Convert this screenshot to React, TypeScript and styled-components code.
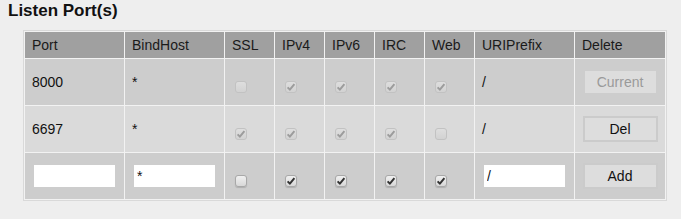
import styled, { createGlobalStyle } from 'styled-components';

const GlobalStyle = createGlobalStyle`
	body {
		margin: 0;
		background: #eeeeee;
		font-family: "Liberation Sans", Arial, sans-serif;
		font-size: 14px;
		color: #111;
	}
`;

const Page = styled.div`
	padding: 1px 8px 0;
`;

const Title = styled.h3`
	margin: 0;
	font-size: 17px;
	line-height: 20px;
	font-weight: bold;
	color: #111;
`;

const Table = styled.table`
	margin: 9px 0 0 15px;
	border: 1px solid #d9d9d9;
	border-collapse: separate;
	border-spacing: 1px;
	background: #f2f2f2;
	table-layout: fixed;
`;

const HeadCell = styled.th<{ $w: number }>`
	width: ${({ $w }) => $w}px;
	height: 26px;
	padding: 0 7px;
	box-sizing: border-box;
	background: #a0a0a0;
	font-weight: normal;
	text-align: left;
	color: #1a1a1a;
	vertical-align: middle;
`;

const Row = styled.tr<{ $alt: boolean }>`
	background: ${({ $alt }) => ($alt ? '#dadada' : '#cdcdcd')};
`;

const Cell = styled.td`
	height: 46px;
	padding: 0 7px;
	box-sizing: border-box;
	vertical-align: middle;
	color: #111;
`;

const ButtonCell = styled(Cell)`
	padding: 0;
	text-align: center;
`;

const Check = styled.span<{ $disabled: boolean }>`
	display: block;
	box-sizing: border-box;
	width: 12px;
	height: 12px;
	margin: 9px 0 0 3px;
	border-radius: 3px;
	border: 1px solid ${({ $disabled }) => ($disabled ? '#c2c2c2' : '#a8a8a8')};
	background: ${({ $disabled }) =>
		$disabled
			? 'linear-gradient(#dedede, #d2d2d2)'
			: 'linear-gradient(#f0f0f0, #d8d8d8)'};
	box-shadow: ${({ $disabled }) =>
		$disabled ? 'none' : '0 1px 1px rgba(0,0,0,0.15)'};
	svg {
		display: block;
	}
`;

const TextInput = styled.input`
	display: block;
	box-sizing: border-box;
	width: 81px;
	height: 22px;
	margin-left: 2px;
	padding: 0 3px;
	border: none;
	outline: none;
	background: #fff;
	font-family: "Liberation Sans", Arial, sans-serif;
	font-size: 14px;
	color: #111;
`;

const Button = styled.button`
	box-sizing: border-box;
	width: 75px;
	height: 26px;
	border: 2px solid #cbcbcb;
	background: #dddddd;
	font-family: "Liberation Sans", Arial, sans-serif;
	font-size: 14px;
	color: #111;
	padding: 0;
	cursor: pointer;

	&:disabled {
		color: #9a9a9a;
		border-color: #cdcdcd;
		cursor: default;
	}
`;

const CheckBox = ({ checked, disabled }: { checked: boolean; disabled: boolean }) => (
	<Check $disabled={disabled}>
		{checked && (
			<svg width="10" height="10" viewBox="0 0 10 10">
				<path
					d="M1.6 5.4 L3.9 7.6 L8.4 2.2"
					fill="none"
					stroke={disabled ? '#9c9c9c' : '#333'}
					strokeWidth="2"
				/>
			</svg>
		)}
	</Check>
);

const COLUMNS = [
	{ name: 'Port', w: 99 },
	{ name: 'BindHost', w: 99 },
	{ name: 'SSL', w: 49 },
	{ name: 'IPv4', w: 49 },
	{ name: 'IPv6', w: 49 },
	{ name: 'IRC', w: 49 },
	{ name: 'Web', w: 49 },
	{ name: 'URIPrefix', w: 99 },
	{ name: 'Delete', w: 90 },
];

const PORTS = [
	{ port: '8000', host: '*', flags: [false, true, true, true, true], uri: '/', current: true },
	{ port: '6697', host: '*', flags: [true, true, true, true, false], uri: '/', current: false },
];

export default function App() {
	return (
		<Page>
			<GlobalStyle />
			<Title>Listen Port(s)</Title>
			<Table>
				<thead>
					<tr>
						{COLUMNS.map((c) => (
							<HeadCell key={c.name} $w={c.w}>
								{c.name}
							</HeadCell>
						))}
					</tr>
				</thead>
				<tbody>
					{PORTS.map((p, i) => (
						<Row key={p.port} $alt={i % 2 === 1}>
							<Cell>{p.port}</Cell>
							<Cell>{p.host}</Cell>
							{p.flags.map((f, j) => (
								<Cell key={j}>
									<CheckBox checked={f} disabled />
								</Cell>
							))}
							<Cell>{p.uri}</Cell>
							<ButtonCell>
								{p.current ? <Button disabled>Current</Button> : <Button>Del</Button>}
							</ButtonCell>
						</Row>
					))}
					<Row $alt={false}>
						<Cell>
							<TextInput defaultValue="" />
						</Cell>
						<Cell>
							<TextInput defaultValue="*" />
						</Cell>
						{[false, true, true, true, true].map((f, j) => (
							<Cell key={j}>
								<CheckBox checked={f} disabled={false} />
							</Cell>
						))}
						<Cell>
							<TextInput defaultValue="/" />
						</Cell>
						<ButtonCell>
							<Button>Add</Button>
						</ButtonCell>
					</Row>
				</tbody>
			</Table>
		</Page>
	);
}
